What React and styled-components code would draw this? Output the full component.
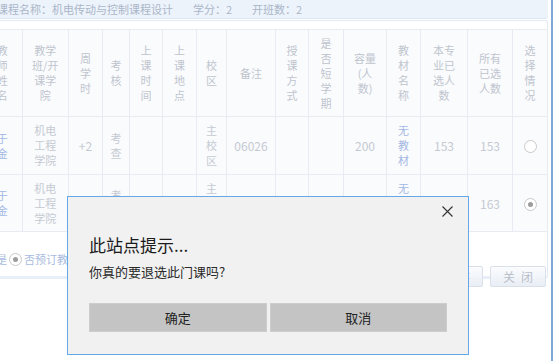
import React from 'react';
import styled, { createGlobalStyle } from 'styled-components';

// 退选课程确认弹窗（背景为淡化的选课表格）

const GlobalStyle = createGlobalStyle`
  html, body {
    margin: 0;
    padding: 0;
    background: #fff;
  }
  body {
    font-family: 'Noto Sans CJK SC', 'Noto Sans', sans-serif;
  }
`;

const Page = styled.div`
  position: relative;
  width: 554px;
  height: 361px;
  overflow: hidden;
  display: flex;
  background: #fff;
`;

const Sheet = styled.div`
  flex: none;
  width: 566px;
  margin-left: -18px;
  display: flex;
  flex-direction: column;
`;

const FrameEdge = styled.div`
  flex: none;
  width: 2px;
  margin-left: 3px;
  background: #7fa7d8;
`;

const TopBar = styled.div`
  height: 18px;
  display: flex;
  align-items: center;
  gap: 20px;
  padding-left: 15px;
  background: #edf3fb;
  border-bottom: 1px solid #dce6f3;
  border-bottom-right-radius: 3px;
  font-size: 11px;
  color: #aab6c9;
  white-space: nowrap;
`;

const Panel = styled.div`
  margin-top: 1px;
  padding-top: 8px;
  border: 1px solid #e2eaf4;
  border-left: none;
  border-bottom: 3px solid #e8eff8;
  border-radius: 0 3px 4px 0;
  height: 259px;
  box-sizing: border-box;
  display: flex;
  flex-direction: column;
`;

const Table = styled.table`
  border-collapse: collapse;
  table-layout: fixed;
  width: 565px;
  font-size: 11px;
  line-height: 15px;
`;

const Th = styled.th`
  height: 86px;
  padding: 0;
  font-weight: normal;
  color: #bfc5ce;
  background: #fafbfd;
  border: 1px solid #e8ecf2;
  text-align: center;
  vertical-align: middle;
  white-space: nowrap;
`;

const Td = styled.td`
  height: ${(p) => p.$h}px;
  padding: 0;
  color: ${(p) => (p.$link ? '#a3b8e3' : '#c5cad2')};
  font-size: ${(p) => (p.$num ? '12px' : '11px')};
  background: #fafbfd;
  border: 1px solid #e8ecf2;
  text-align: center;
  vertical-align: middle;
  white-space: nowrap;
`;

const Radio = styled.span`
  display: inline-block;
  width: 11px;
  height: 11px;
  border-radius: 50%;
  border: 1px solid #c9c9c9;
  background: #fff;
  position: relative;
  vertical-align: middle;
  &::after {
    content: '';
    display: ${(p) => (p.$checked ? 'block' : 'none')};
    position: absolute;
    left: 3px;
    top: 3px;
    width: 5px;
    height: 5px;
    border-radius: 50%;
    background: #9c9c9c;
  }
`;

const Footer = styled.div`
  flex: 1;
  display: flex;
  justify-content: space-between;
  align-items: flex-start;
  padding-right: 1px;
`;

const Options = styled.div`
  margin-top: 20px;
  padding-left: 14px;
  display: flex;
  align-items: center;
  gap: 2px;
  font-size: 11px;
  line-height: 14px;
  color: #a9bbe0;
  white-space: nowrap;
`;

const Buttons = styled.div`
  margin-top: 34px;
  display: flex;
  gap: 7px;
`;

const PageButton = styled.button`
  width: 56px;
  height: 21px;
  padding: 0;
  font-family: inherit;
  font-size: 12px;
  letter-spacing: 6px;
  text-indent: 6px;
  color: #b9c0ca;
  border: 1px solid #d9e0e9;
  border-radius: 2px;
  background: linear-gradient(#fbfcfe, #e9eef5);
`;

const Dialog = styled.div`
  position: absolute;
  left: 67px;
  top: 196px;
  width: 402px;
  height: 159px;
  box-sizing: border-box;
  background: #f1f1f1;
  border: 1px solid #64a8e6;
  padding: 0 21px 0 21px;
  display: flex;
  flex-direction: column;
`;

const DialogHead = styled.div`
  display: flex;
  justify-content: flex-end;
  padding-top: 9px;
  margin-right: -6px;
  height: 11px;
`;

const CloseIcon = styled.svg`
  width: 11px;
  height: 11px;
  display: block;
`;

const DialogTitle = styled.div`
  margin-top: 16px;
  font-size: 17px;
  line-height: 24px;
  color: #1b1b1b;
`;

const DialogMessage = styled.div`
  margin-top: 5px;
  font-size: 13px;
  line-height: 20px;
  color: #2a2a2a;
`;

const DialogActions = styled.div`
  margin-top: 21px;
  display: flex;
  gap: 3px;
`;

const DialogButton = styled.button`
  flex: 1;
  height: 29px;
  padding: 0;
  font-family: inherit;
  font-size: 13px;
  color: #222;
  background: #c4c4c4;
  border: 1px solid #cdcdcd;
`;

const cols = [39.5, 46.5, 34, 27, 33, 34, 30, 49, 33, 35, 43, 34, 47, 45, 35];

const heads = [
  ['教', '师', '姓', '名'],
  ['教学', '班/开', '课学', '院'],
  ['周', '学', '时'],
  ['考', '核'],
  ['上', '课', '时', '间'],
  ['上', '课', '地', '点'],
  ['校', '区'],
  ['备注'],
  ['授', '课', '方', '式'],
  ['是', '否', '短', '学', '期'],
  ['容量', '(人', '数)'],
  ['教', '材', '名', '称'],
  ['本专', '业已', '选人', '数'],
  ['所有', '已选', '人数'],
  ['选', '择', '情', '况'],
];

const rows = [
  { h: 57, picked: false, remark: '06026', mine: '153', all: '153' },
  { h: 56, picked: true, remark: '', mine: '153', all: '163' },
];

const Lines = ({ items }) =>
  items.map((t, i) => (
    <React.Fragment key={i}>
      {i > 0 && <br />}
      {t}
    </React.Fragment>
  ));

function CourseRow({ row }) {
  return (
    <tr>
      <Td $h={row.h} $link>
        <Lines items={['于', '金']} />
      </Td>
      <Td $h={row.h}>
        <Lines items={['机电', '工程', '学院']} />
      </Td>
      <Td $h={row.h} $num>+2</Td>
      <Td $h={row.h}>
        <Lines items={['考', '查']} />
      </Td>
      <Td $h={row.h} />
      <Td $h={row.h} />
      <Td $h={row.h}>
        <Lines items={['主', '校', '区']} />
      </Td>
      <Td $h={row.h} $num>{row.remark}</Td>
      <Td $h={row.h} />
      <Td $h={row.h} />
      <Td $h={row.h} $num>200</Td>
      <Td $h={row.h} $link>
        <Lines items={['无', '教', '材']} />
      </Td>
      <Td $h={row.h} $num>{row.mine}</Td>
      <Td $h={row.h} $num>{row.all}</Td>
      <Td $h={row.h}>
        <Radio $checked={row.picked} />
      </Td>
    </tr>
  );
}

export default function App() {
  return (
    <>
      <GlobalStyle />
      <Page>
        <Sheet>
          <TopBar>
            <span>课程名称：机电传动与控制课程设计</span>
            <span>学分：2</span>
            <span>开班数：2</span>
          </TopBar>
          <Panel>
            <Table>
              <colgroup>
                {cols.map((w, i) => (
                  <col key={i} style={{ width: w }} />
                ))}
              </colgroup>
              <thead>
                <tr>
                  {heads.map((h, i) => (
                    <Th key={i}>
                      <Lines items={h} />
                    </Th>
                  ))}
                </tr>
              </thead>
              <tbody>
                {rows.map((r, i) => (
                  <CourseRow key={i} row={r} />
                ))}
              </tbody>
            </Table>
            <Footer>
              <Options>
                <span>是</span>
                <Radio $checked />
                <span>否预订教材</span>
              </Options>
              <Buttons>
                <PageButton>保存</PageButton>
                <PageButton>关闭</PageButton>
              </Buttons>
            </Footer>
          </Panel>
        </Sheet>
        <FrameEdge />
        <Dialog>
          <DialogHead>
            <CloseIcon viewBox="0 0 11 11">
              <path d="M0.5 0.5 L10.5 10.5 M10.5 0.5 L0.5 10.5" stroke="#333" strokeWidth="1.1" fill="none" />
            </CloseIcon>
          </DialogHead>
          <DialogTitle>此站点提示...</DialogTitle>
          <DialogMessage>你真的要退选此门课吗?</DialogMessage>
          <DialogActions>
            <DialogButton>确定</DialogButton>
            <DialogButton>取消</DialogButton>
          </DialogActions>
        </Dialog>
      </Page>
    </>
  );
}
